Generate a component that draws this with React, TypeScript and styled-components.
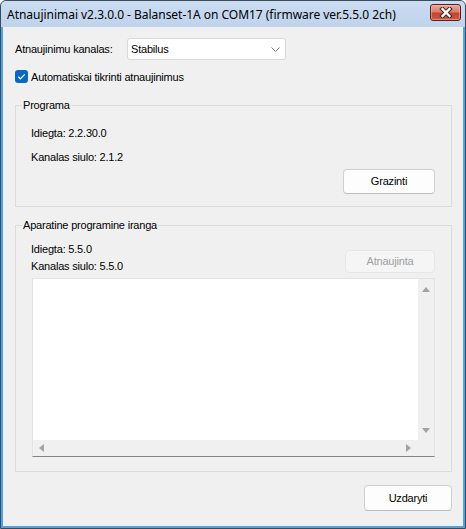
import React from 'react';
import styled, { createGlobalStyle } from 'styled-components';

const Global = createGlobalStyle`
  html, body { margin: 0; padding: 0; background: #ffffff; }
  body { font-family: "Liberation Sans", Arial, sans-serif; }
  * { box-sizing: border-box; }
`;

const Window = styled.div`
  width: 466px;
  height: 529px;
  border: 1px solid #3d4a5a;
  border-radius: 6px 6px 0 0;
  background: #4fa3e3;
  display: flex;
  flex-direction: column;
  overflow: hidden;
`;

const TitleBar = styled.div`
  height: 26px;
  flex: none;
  display: flex;
  justify-content: space-between;
  padding: 0 4px 0 6px;
  background: linear-gradient(#cadcf1, #bfd3ec);
`;

const TitleText = styled.div`
  font-family: "Noto Sans", "Open Sans", sans-serif;
  font-size: 12px;
  letter-spacing: -0.03px;
  line-height: 26px;
  padding-top: 1px;
  color: #000;
  white-space: nowrap;
`;

const CloseButton = styled.div`
  margin-top: 3px;
  width: 31px;
  height: 17px;
  border: 1px solid #5e1e16;
  border-radius: 3px;
  background: linear-gradient(#e8aa9e 0%, #d97d6c 45%, #c5452f 55%, #cc5a42 100%);
  box-shadow: inset 0 0 0 1px rgba(255, 200, 190, 0.45);
  display: flex;
  align-items: center;
  justify-content: center;
`;

const Client = styled.div`
  flex: 1;
  margin: 0 2px 2px;
  background: #f0f0f0;
  padding: 11px 11px 15px 12px;
  display: flex;
  flex-direction: column;
  font-size: 11px;
  letter-spacing: -0.2px;
  color: #000;
`;

const ChannelRow = styled.div`
  display: flex;
  align-items: center;
  height: 22px;
`;

const FieldLabel = styled.div`
  width: 112px;
  line-height: 13px;
`;

const Combo = styled.div`
  width: 159px;
  height: 22px;
  background: #ffffff;
  border: 1px solid #d9d9d9;
  border-radius: 3px;
  display: flex;
  align-items: center;
  justify-content: space-between;
  padding: 0 5px 0 3px;
`;

const CheckRow = styled.div`
  margin-top: 10px;
  height: 13px;
  display: flex;
  align-items: center;
  gap: 3px;
`;

const CheckBox = styled.div`
  width: 13px;
  height: 13px;
  border-radius: 3px;
  background: #0a68c2;
  display: flex;
  align-items: center;
  justify-content: center;
`;

const Group = styled.fieldset<{ $gap: number }>`
  margin: ${(p) => p.$gap}px 0 0;
  padding: 0;
  min-width: 0;
  border: 1px solid #dcdcdc;
  border-radius: 0;
`;

const Legend = styled.legend`
  margin-left: 6px;
  padding: 0 1px;
  line-height: 13px;
  height: 13px;
`;

const ProgramBody = styled.div`
  padding: 15px 16px 12px 15px;
  display: flex;
  flex-direction: column;
`;

const InfoLine = styled.div<{ $gap?: number }>`
  line-height: 13px;
  height: 13px;
  margin-top: ${(p) => p.$gap ?? 0}px;
  white-space: nowrap;
`;

const Button = styled.div<{ $w: number; $h: number; $disabled?: boolean }>`
  width: ${(p) => p.$w}px;
  height: ${(p) => p.$h}px;
  border-radius: 4px;
  border: 1px solid ${(p) => (p.$disabled ? '#e6e6e6' : '#d0d0d0')};
  border-bottom-color: ${(p) => (p.$disabled ? '#e6e6e6' : '#bcbcbc')};
  background: ${(p) => (p.$disabled ? '#f5f5f5' : '#fdfdfd')};
  color: ${(p) => (p.$disabled ? '#a0a0a0' : '#000')};
  display: flex;
  align-items: center;
  justify-content: center;
  line-height: 13px;
  align-self: flex-end;
  flex: none;
`;

const FirmwareBody = styled.div`
  padding: 8px 16px 14px 15px;
  display: flex;
  flex-direction: column;
`;

const FirmwareTop = styled.div`
  display: flex;
  justify-content: space-between;
  align-items: flex-start;
`;

const InfoColumn = styled.div`
  margin-top: 3px;
  display: flex;
  flex-direction: column;
  gap: 4px;
`;

const LogBox = styled.div`
  margin: 5px 0 0 1px;
  height: 179px;
  border: 1px solid #e3e3e3;
  border-bottom-color: #848484;
  display: grid;
  grid-template-columns: 1fr 16px;
  grid-template-rows: 1fr 16px;
`;

const LogArea = styled.div`
  background: #ffffff;
`;

const VScroll = styled.div`
  background: #f0f0f0;
  display: flex;
  flex-direction: column;
  justify-content: space-between;
  align-items: center;
  padding: 7px 0 6px;
`;

const HScroll = styled.div`
  background: #f0f0f0;
  display: flex;
  justify-content: space-between;
  align-items: center;
  padding: 0 6px 0 5px;
`;

const Corner = styled.div`
  background: #f0f0f0;
`;

const Footer = styled.div`
  margin-top: 13px;
  display: flex;
  justify-content: flex-end;
`;

const Arrow = ({ dir }: { dir: 'up' | 'down' | 'left' | 'right' }) => {
  const pts: Record<string, string> = {
    up: '0,6 4,1 8,6',
    down: '0,1 4,6 8,1',
    left: '6,0 1,4 6,8',
    right: '1,0 6,4 1,8',
  };
  const vertical = dir === 'up' || dir === 'down';
  return (
    <svg width={vertical ? 8 : 7} height={vertical ? 7 : 8} viewBox={vertical ? '0 0 8 7' : '0 0 7 8'}>
      <polygon points={pts[dir]} fill="#a3a3a3" />
    </svg>
  );
};

export default function App() {
  return (
    <>
      <Global />
      <Window>
        <TitleBar>
          <TitleText>Atnaujinimai v2.3.0.0 - Balanset-1A on COM17 (firmware ver.5.5.0 2ch)</TitleText>
          <CloseButton>
            <svg width="14" height="11" viewBox="0 0 14 11">
              <path d="M3.5 2 L10.5 9 M10.5 2 L3.5 9" stroke="#4a2420" strokeWidth="4.4" strokeLinecap="square" fill="none" />
              <path d="M3.5 2 L10.5 9 M10.5 2 L3.5 9" stroke="#ffffff" strokeWidth="2.4" strokeLinecap="square" fill="none" />
            </svg>
          </CloseButton>
        </TitleBar>
        <Client>
          <ChannelRow>
            <FieldLabel>Atnaujinimu kanalas:</FieldLabel>
            <Combo>
              <span>Stabilus</span>
              <svg width="9" height="5" viewBox="0 0 9 5">
                <path d="M0.5 0.5 L4.5 4.5 L8.5 0.5" stroke="#7a7a7a" strokeWidth="1" fill="none" />
              </svg>
            </Combo>
          </ChannelRow>
          <CheckRow>
            <CheckBox>
              <svg width="13" height="13" viewBox="0 0 13 13">
                <path d="M3.3 6.8 L5.4 8.8 L9.7 4.3" stroke="#ffffff" strokeWidth="1.2" fill="none" />
              </svg>
            </CheckBox>
            <span>Automatiskai tikrinti atnaujinimus</span>
          </CheckRow>
          <Group $gap={16}>
            <Legend>Programa</Legend>
            <ProgramBody>
              <InfoLine>Idiegta: 2.2.30.0</InfoLine>
              <InfoLine $gap={11}>Kanalas siulo: 2.1.2</InfoLine>
              <Button $w={92} $h={25} style={{ marginTop: 5 }}>Grazinti</Button>
            </ProgramBody>
          </Group>
          <Group $gap={12}>
            <Legend>Aparatine programine iranga</Legend>
            <FirmwareBody>
              <FirmwareTop>
                <InfoColumn>
                  <InfoLine>Idiegta: 5.5.0</InfoLine>
                  <InfoLine>Kanalas siulo: 5.5.0</InfoLine>
                </InfoColumn>
                <Button $w={90} $h={23} $disabled>Atnaujinta</Button>
              </FirmwareTop>
              <LogBox>
                <LogArea />
                <VScroll>
                  <Arrow dir="up" />
                  <Arrow dir="down" />
                </VScroll>
                <HScroll>
                  <Arrow dir="left" />
                  <Arrow dir="right" />
                </HScroll>
                <Corner />
              </LogBox>
            </FirmwareBody>
          </Group>
          <Footer>
            <Button $w={88} $h={26}>Uzdaryti</Button>
          </Footer>
        </Client>
      </Window>
    </>
  );
}
